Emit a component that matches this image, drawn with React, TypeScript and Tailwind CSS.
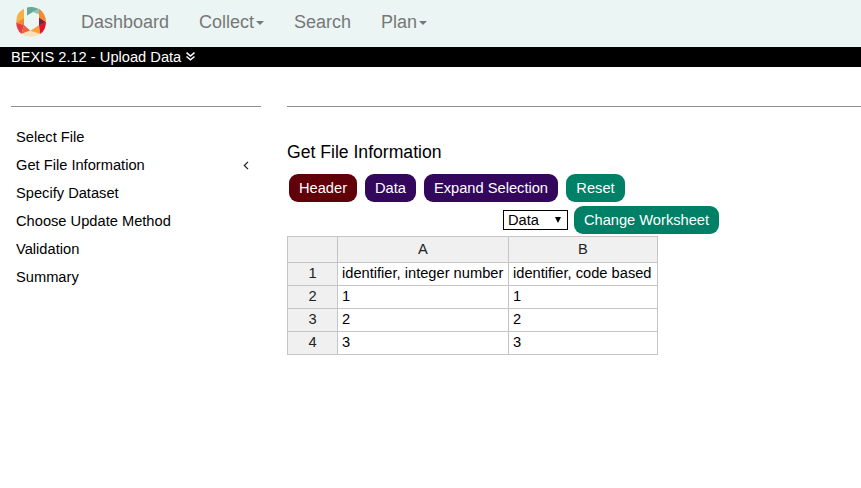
import React from "react";

const steps = ["Select File", "Get File Information", "Specify Dataset", "Choose Update Method", "Validation", "Summary"];
const rows = [
  ["identifier, integer number", "identifier, code based"],
  ["1", "1"],
  ["2", "2"],
  ["3", "3"],
];

function Logo() {
  return (
    <svg className="ml-4 h-[30px] w-[30px] shrink-0" viewBox="0 0 30 30">
      <path d="M8 1.8 L8 12 L.4 16.2 Q-.5 6 8 1.8Z" fill="#f8b040" />
      <path d="M8 11 L8 18.5 L.2 16Z" fill="#ee8a35" />
      <path d="M.2 15.8 L8 18.3 L5.4 27 Q.4 22.5 .2 15.8Z" fill="#e63b43" />
      <path d="M8 18 L14.5 23.8 L5.4 27Z" fill="#ea6440" />
      <path d="M5.4 27 L15 23 L24.4 27 Q15 32.5 5.4 27Z" fill="#fcdfb8" />
      <path d="M14.5 23.8 L23.2 18 L24.4 27Z" fill="#f8a13c" />
      <path d="M23 18.5 L30 14.7 Q30 22.5 24.4 27Z" fill="#e0152c" />
      <path d="M23 10.2 L30 14.9 L23 18.8Z" fill="#84203a" />
      <path d="M23 1.8 Q30 6.5 30 15 L23 10.4Z" fill="#f58a30" />
      <path d="M11 .4 Q17.5 -1 23 2 L17 5 L11 8.5Z" fill="#67a998" />
      <path d="M23 2 L23 7.3 L16 4.8Z" fill="#8cc5b2" />
    </svg>
  );
}

function Caret() {
  return (
    <svg className="mt-[2px] ml-[2px] h-1 w-2" viewBox="0 0 8 4">
      <path d="M0 0H8L4 4Z" fill="#777" />
    </svg>
  );
}

function Button({ label, look }: { label: string; look: string }) {
  return <button className={`h-7 shrink-0 rounded-[9px] text-center whitespace-nowrap text-white ${look}`}>{label}</button>;
}

export default function App() {
  return (
    <div className="h-[488px] w-[861px] overflow-hidden bg-white font-['Liberation_Sans',Arial,sans-serif] text-[14.667px] leading-5 text-black">
      <nav className="flex h-[47px] items-center bg-[#ebf5f4] pb-[3px] text-[18px] text-[#777]">
        <Logo />
        <span className="ml-[35px] w-[118px]">Dashboard</span>
        <span className="flex w-[95px] items-center">Collect<Caret /></span>
        <span className="w-[87px]">Search</span>
        <span className="flex items-center">Plan<Caret /></span>
      </nav>
      <header className="flex h-5 items-center bg-black pl-[11px] text-white">
        BEXIS 2.12 - Upload Data
        <svg className="mb-px ml-[5px] h-[9px] w-[9px]" viewBox="0 0 9 9" fill="none" stroke="white" strokeWidth="1.6">
          <path d="M.5 .7L4.5 4L8.5 .7M.5 4.5L4.5 7.8L8.5 4.5" />
        </svg>
      </header>
      <div className="flex pt-[39px] pl-[11px]">
        <aside className="w-[250px] border-t border-[#909090] pt-4">
          {steps.map((s, i) => (
            <div key={s} className="flex h-7 items-center justify-between pr-3 pl-[5px]">
              <span>{s}</span>
              {i === 1 && (
                <svg className="h-[9px] w-[6px]" viewBox="0 0 6 9" fill="none" stroke="#222" strokeWidth="1.2">
                  <path d="M5 .8L1.3 4.5L5 8.2" />
                </svg>
              )}
            </div>
          ))}
        </aside>
        <main className="ml-[26px] w-[574px] border-t border-[#909090] pt-[34px]">
          <h1 className="h-[33px] text-[17.6px] leading-[22px]">Get File Information</h1>
          <div className="flex gap-2 pl-0.5">
            <Button label="Header" look="w-[68px] bg-[#600009]" />
            <Button label="Data" look="w-[51px] bg-[#33085c]" />
            <Button label="Expand Selection" look="w-[134px] bg-[#33085c]" />
            <Button label="Reset" look="w-[59px] bg-[#008066]" />
          </div>
          <div className="mt-1 flex items-center pl-[216px]">
            <div className="flex h-5 w-[65px] items-center justify-between border border-black pr-[6px] pl-1">
              Data
              <svg className="h-[6px] w-[6px]" viewBox="0 0 6 6">
                <path d="M0 0H6L3 6Z" />
              </svg>
            </div>
            <span className="w-1.5" />
            <Button label="Change Worksheet" look="w-[145px] bg-[#008066]" />
          </div>
          <table className="mt-0.5 w-[371px] table-fixed border-separate border-spacing-0 border-t border-l border-[#c5c5c5]">
            <colgroup>
              <col className="w-[50px]" />
              <col className="w-[171px]" />
              <col className="w-[149px]" />
            </colgroup>
            <thead>
              <tr className="h-[26px] bg-[#f0f0f0] text-[#222]">
                {["", "A", "B"].map((h) => (
                  <th key={h} className="border-r border-b border-[#c5c5c5] p-0 pb-[2px] font-normal">{h}</th>
                ))}
              </tr>
            </thead>
            <tbody>
              {rows.map((r, i) => (
                <tr key={i} className="h-[23px]">
                  <th className="border-r border-b border-[#c5c5c5] bg-[#f0f0f0] p-0 pb-[2px] font-normal text-[#222]">{i + 1}</th>
                  {r.map((c, j) => (
                    <td key={j} className="border-r border-b border-[#c5c5c5] p-0 pb-[2px] pl-1 whitespace-nowrap">{c}</td>
                  ))}
                </tr>
              ))}
            </tbody>
          </table>
        </main>
      </div>
    </div>
  );
}
